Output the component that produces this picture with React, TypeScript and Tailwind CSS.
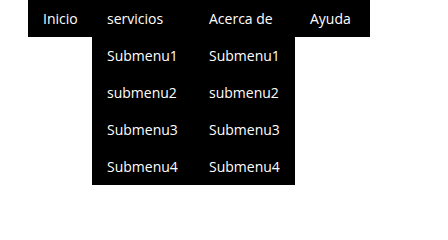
const menu = [
  { label: 'Inicio', width: 'w-[64px]', sub: [] as string[] },
  { label: 'servicios', width: 'w-[102px]', sub: ['Submenu1', 'submenu2', 'Submenu3', 'Submenu4'] },
  { label: 'Acerca de', width: 'w-[101px]', sub: ['Submenu1', 'submenu2', 'Submenu3', 'Submenu4'] },
  { label: 'Ayuda', width: 'w-[75px]', sub: [] as string[] },
]

export default function App() {
  return (
    <div className="min-h-[204px] bg-white pl-[28px] font-['Open_Sans',sans-serif] text-[14px] text-white">
      <nav>
        <ul className="flex w-fit bg-black">
          {menu.map((item) => (
            <li key={item.label} className={`relative h-[37px] ${item.width}`}>
              <a href="#" className="flex h-full items-center px-[15px]">
                {item.label}
              </a>
              {item.sub.length > 0 && (
                <ul className="absolute left-0 top-full w-full bg-black">
                  {item.sub.map((s) => (
                    <li key={s} className="h-[37px]">
                      <a href="#" className="flex h-full items-center px-[15px]">
                        {s}
                      </a>
                    </li>
                  ))}
                </ul>
              )}
            </li>
          ))}
        </ul>
      </nav>
    </div>
  )
}
